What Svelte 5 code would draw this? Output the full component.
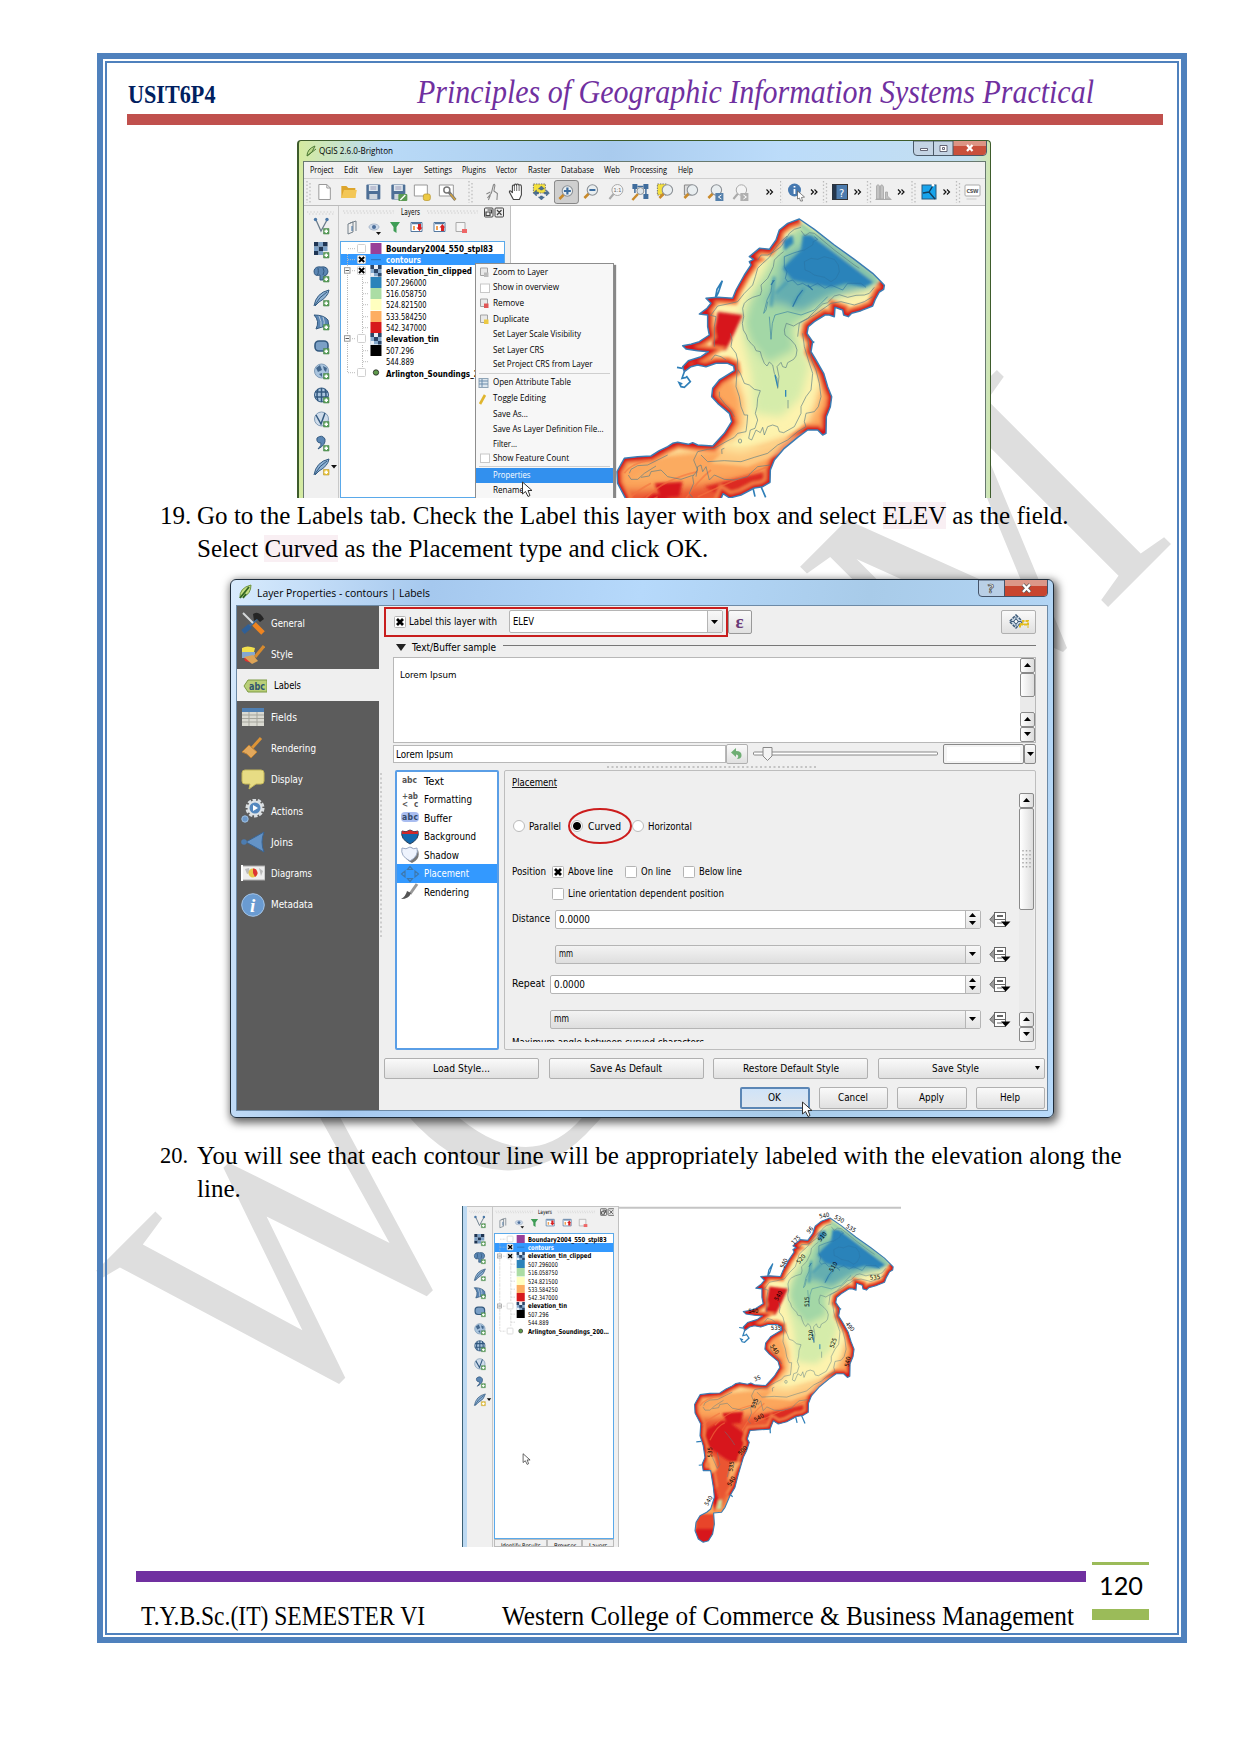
<script>
  const menus = [['Project', 23.5], ['Edit', 14], ['View', 15], ['Layer', 20], ['Settings', 28], ['Plugins', 24], ['Vector', 21], ['Raster', 23], ['Database', 33], ['Web', 16], ['Processing', 37], ['Help', 15]];

  const tools = [
    ['grip', 8], ['new', 24.7], ['open', 24.7], ['save', 24.7], ['saveas', 24.7], ['compose', 24.7], ['manage', 24.7], ['grip', 20],
    ['touch', 24.8], ['pan', 24.8], ['pansel', 24.8], ['zoomin', 24.8], ['zoomout', 24.8], ['zoom11', 24.8], ['zoomfull', 24.8], ['zoomsel', 24.8],
    ['zoomlayer', 24.8], ['zoomlast', 24.8], ['zoomnext', 24.8], ['gap', 6.5], ['more', 21], ['grip', 3], ['identify', 25], ['more', 12], ['grip', 9],
    ['help', 22], ['more', 13], ['grip', 9], ['histogram', 21], ['more', 14], ['grip', 10], ['georef', 22], ['more', 13], ['grip', 9], ['csw', 21]
  ];

  const layerTools = ['vector', 'raster', 'postgis', 'feather', 'mssql', 'oracle', 'wms', 'wcs', 'wfs', 'csv', 'newshape'];

  const tree = [
    { t: 'Boundary2004_550_stpl83', w: 107, b: 1, c: 'off', s: '#983f98' },
    { t: 'contours', w: 35, b: 1, c: 'on', s: 'line', sel: 1 },
    { t: 'elevation_tin_clipped', w: 86, b: 1, c: 'on', s: 'grid', e: 1 },
    { t: '507.296000', w: 40.5, s: '#2b83ba' },
    { t: '516.058750', w: 40.5, s: '#abdda4' },
    { t: '524.821500', w: 40.5, s: '#ffffbf' },
    { t: '533.584250', w: 40.5, s: '#fdae61' },
    { t: '542.347000', w: 40.5, s: '#d7191c' },
    { t: 'elevation_tin', w: 53, b: 1, c: 'off', s: 'grid', e: 1 },
    { t: '507.296', w: 28, s: '#000' },
    { t: '544.889', w: 28, s: '#fff' },
    { t: 'Arlington_Soundings_200…', w: 110, b: 1, c: 'off', s: 'dot' }
  ];

  const context = [
    { t: 'Zoom to Layer', w: 55, h: 15.5, i: 'layer' },
    { t: 'Show in overview', w: 66, h: 15.2, i: 'box' },
    { t: 'Remove', w: 31, h: 16, i: 'remove' },
    { t: 'Duplicate', w: 36, h: 16, i: 'dup' },
    { t: 'Set Layer Scale Visibility', w: 88, h: 15.4 },
    { t: 'Set Layer CRS', w: 51, h: 14.8 },
    { t: 'Set Project CRS from Layer', w: 99.5, h: 14.8 },
    { sep: 1 },
    { t: 'Open Attribute Table', w: 78, h: 16, i: 'table' },
    { t: 'Toggle Editing', w: 53, h: 16, i: 'pencil' },
    { t: 'Save As...', w: 35, h: 15 },
    { t: 'Save As Layer Definition File...', w: 110.5, h: 15 },
    { t: 'Filter...', w: 24, h: 14.5 },
    { t: 'Show Feature Count', w: 76, h: 14.5, i: 'box' },
    { sep: 1 },
    { t: 'Properties', w: 37.5, h: 14.6, sel: 1 },
    { t: 'Rename', w: 31, h: 15 }
  ];

  const tabs = [['General', 34], ['Style', 22], ['Labels', 27], ['Fields', 26], ['Rendering', 45], ['Display', 32], ['Actions', 32], ['Joins', 22], ['Diagrams', 41], ['Metadata', 42]];
  const pages = [['Text', 20], ['Formatting', 48], ['Buffer', 28], ['Background', 52], ['Shadow', 35], ['Placement', 45], ['Rendering', 45]];

  const shore = 'M595,57L640,88 700,135 760,178 815,220 838,243 850,256 848,268 835,276 822,300 815,318 780,332 752,340 742,350 728,345 725,330 702,322 700,350 685,345 672,345 640,365 622,380 618,400 635,425 630,455 645,480 668,520 680,560 692,590 688,620 676,650 675,700 665,705 650,690 620,690 590,712 550,745 520,780 508,810 507,847 485,860 460,864 420,885 386,894 366,881 353,915 272,921 261,955 269,969 258,1003 245,1030 225,1098 211,1152 191,1186 171,1233 157,1253 125,1256 128,1301 121,1341 104,1369 83,1375 63,1362 50,1328 54,1294 70,1267 97,1253 113,1240 128,1192 124,1152 113,1084 83,1084 79,1057 90,1030 83,982 70,942 73,894 50,850 48,815 70,775 110,770 150,768 175,752 200,740 215,730 230,727 262,733 275,728 290,735 335,738 370,700 392,665 385,640 350,610 332,590 335,565 355,540 400,512 398,498 380,490 345,490 315,500 290,495 270,500 250,515 245,500 262,482 300,470 322,455 290,452 255,447 245,437 270,433 295,425 325,405 320,380 320,345 295,342 318,325 330,310 315,295 350,292 395,295 405,270 430,225 450,195 445,185 458,178 445,170 475,145 505,148 525,120 535,90 560,70Z';
  const redShore = 'M838,243L850,256 848,268 835,276 822,300 815,318 780,332 752,340 742,350 728,345 725,330 702,322 700,350 672,345 640,365 622,380 618,400 635,425 630,455 645,480 668,520 680,560 692,590 688,620 676,650 675,700 665,705 650,690 620,690 590,712 550,745 520,780 508,810 507,847 485,860 460,864 420,885 386,894 366,881 353,915 272,921 261,955 269,969 258,1003 245,1030 225,1098 211,1152 191,1186M124,1152L113,1084 83,1084 79,1057 90,1030 83,982 70,942 73,894 50,850 48,815 70,775 150,768 200,740 230,727 290,735 335,738 370,700 392,665 385,640 350,610 332,590 335,565 355,540 400,512 398,498 380,490 345,490 315,500 290,495 250,515 245,500 262,482 300,470 322,455 290,452 255,447 245,437 295,425 325,405 320,380 320,345 295,342 318,325 330,310 315,295 350,292 395,295 405,270 430,225 450,195 445,185 458,178 445,170 475,145 505,148 525,120 535,90 560,70 595,57';

  const contourLabels = [[463, 65, 540, -10], [508, 75, 530, 30], [543, 103, 535, 30], [420, 108, 96, -50], [378, 138, 175, -45], [457, 128, 510, -50], [393, 195, 520, -50], [342, 208, 540, -65], [490, 218, 510, -60], [615, 250, 535, -5], [325, 305, 540, -60], [250, 352, 540, 0], [412, 323, 515, -90], [318, 403, 535, 0], [423, 423, 520, -90], [540, 398, 490, 50], [490, 447, 525, -70], [314, 466, 540, 55], [533, 503, 540, -80], [262, 553, 35, -20], [254, 628, 535, -70], [267, 671, 540, -30], [119, 775, 535, -90], [218, 770, 500, -45], [184, 817, 535, -80], [184, 862, 540, -60], [116, 920, 540, -60]];
</script>

{#snippet fit(text, w, size = 10)}
  <svg class="fit" width={w} height={size} role="img"><text y={size * 0.84} font-size={size} textLength={w} lengthAdjust="spacingAndGlyphs">{text}</text></svg>
{/snippet}

{#snippet lens(x, y)}
  <path d="M{x - 3} {y + 3}L{x - 8} {y + 8}" stroke="#c98a2b" stroke-width="2.6" /><circle cx={x} cy={y} r="5.2" fill="#e9eef0" stroke="#8c9196" stroke-width="1.1" />
{/snippet}

{#snippet toolIcon(k, w)}
  <svg width={w} height="26" viewBox="{-w / 2} -13 {w} 26" fill="none">
    {#if k === 'grip'}<path d="M-1-11V11M2-9V12" stroke="#bbb" stroke-dasharray="1.4 2.2" stroke-width="1.3" />
    {:else if k === 'more'}<path d="M-3-2.5L-.5 0-3 2.5M.5-2.5L3 0 .5 2.5" stroke="#111" stroke-width="1.2" />
    {:else if k === 'new'}<path d="M-5.5-7.500H2.500L6-4V7.500H-5.500Z" fill="#fff" stroke="#999" /><path d="M2.500-7.500V-4H6" stroke="#999" />
    {:else if k === 'open'}<path d="M-7-6H-2L0-4H7V6H-7Z" fill="#dda52c" /><path d="M-7 6L-4.500-2H8.500L7 6Z" fill="#f3c757" />
    {:else if k === 'save' || k === 'saveas'}<rect x="-7" y="-7.500" width="14" height="15" rx="1" fill="#4d6f96" /><path d="M-4.500-7H4.500V-1H-4.500Z" fill="#dfe7ee" /><path d="M-4 2H4V7H-4Z" fill="#cfd6dd" /><path d="M-3-5H3M-3-3H3" stroke="#88a" stroke-width=".8" />
      {#if k === 'saveas'}<rect x="0" y="2" width="9" height="7" rx="1" fill="#5b9a52" /><path d="M2 8L7 3" stroke="#fff" stroke-width="1.4" />{/if}
    {:else if k === 'compose'}<path d="M-8-7H5V4H-8Z" fill="#fff" stroke="#999" /><rect x="1" y="2" width="7" height="6.500" rx="2" fill="#ecc944" stroke="#b8952a" stroke-width=".7" />
    {:else if k === 'manage'}<path d="M-8-7H6V4H-8Z" fill="#fff" stroke="#999" /><circle cx="-.5" cy="-2" r="3" stroke="#777" stroke-width="1.5" /><path d="M1.500 0L8 8" stroke="#777" stroke-width="2.800" /><path d="M3 2L8 8" stroke="#d9a63c" stroke-width="1.200" />
    {:else if k === 'touch'}<path d="M-5 6L-1 1 1-7Q2-8.500 2.500-6.500L1.500-1 5 1.500 4.500 8M-6 2L-2 0M-2 3L-4 8" stroke="#888" stroke-width="1.100" />
    {:else if k === 'pan'}<path d="M-3 7.500L-7 0C-7-2-5-1-4 1V-6Q-3-8-2-6V-7Q-1-9 0-7Q1-9 2.500-7Q5-8 5-5V3L3 7.500Z" fill="#fff" stroke="#444" stroke-width="1.100" /><path d="M-2-6V-1M.300-7V-1M2.700-7V-1" stroke="#444" stroke-width=".8" />
    {:else if k === 'pansel'}<rect x="-8" y="-8" width="12" height="9" fill="#f4e03e" stroke="#777" stroke-dasharray="1.500 1" /><path d="M0-6L3-3H1V-2H-1V-3H-3ZM0 8L3 5H1V4H-1V5H-3ZM-8 1L-5-2V0H-3V2H-5V4ZM8 1L5-2V0H3V2H5V4Z" fill="#4c7095" stroke="#35557a" stroke-width=".5" />
    {:else if k === 'zoomin'}<rect x="-12" y="-11.500" width="24" height="23" rx="2.500" fill="#cfcfcf" stroke="#858585" />{@render lens(1, -1)}<path d="M-2.500-1H4.500M1-4.500V2.500" stroke="#3c6da0" stroke-width="2.200" />
    {:else if k === 'zoomout'}{@render lens(1, -2)}<path d="M-2-2H4" stroke="#3c6da0" stroke-width="2.200" />
    {:else if k === 'zoom11'}<path d="M-2 1L-7 7" stroke="#aaa" stroke-width="2" /><circle cx="1" cy="-2" r="5.500" fill="#f4f4f4" stroke="#aaa" /><text x="-3" y="0" font-size="5.500" fill="#666">1:1</text>
    {:else if k === 'zoomfull'}<path d="M-8-8H-3V-3H-8ZM3-8H8V-3H3ZM3 2H8V7H3Z" fill="#3f6c9c" /><path d="M-3-5.500H3M5.500-3V2M-5.500-3V1" stroke="#3f6c9c" stroke-width="1.500" /><circle cx="0" cy="-1" r="3.500" fill="#dfe6ea" stroke="#8c9196" /><path d="M-2.500 2L-8 8" stroke="#c98a2b" stroke-width="2.500" />
    {:else if k === 'zoomsel'}<path d="M-8-8H1V3H-8Z" fill="#f4e03e" stroke="#777" stroke-dasharray="1.500 1" />{@render lens(2, -2)}
    {:else if k === 'zoomlayer'}<path d="M-6-7H2V3H-6Z" fill="#ddd" stroke="#888" />{@render lens(2, -2)}
    {:else if k === 'zoomlast'}{@render lens(1, -2)}<rect x="0" y="1" width="8" height="8" fill="#5580ab" /><path d="M6 3L3 5 6 7" stroke="#fff" />
    {:else if k === 'zoomnext'}<path d="M-2 1L-7 7" stroke="#aaa" stroke-width="2" /><circle cx="1" cy="-2" r="5.200" fill="#f4f4f4" stroke="#aaa" /><rect x="0" y="1" width="8" height="8" fill="#b0b0b0" /><path d="M3 3L6 5 3 7" stroke="#fff" />
    {:else if k === 'identify'}<circle cx="-1" cy="-2" r="6.500" fill="#4679b0" /><path d="M-1-3V2M-1-6V-4.500" stroke="#fff" stroke-width="1.800" /><path d="M2-1L9 5 6 5.500 7 9 5 9 4 6 2 7Z" fill="#fff" stroke="#555" stroke-width=".7" />
    {:else if k === 'help'}<rect x="-7.500" y="-7.500" width="15" height="15" fill="#4d7cae" stroke="#333" /><rect x="-7.500" y="-7.500" width="4" height="15" fill="#24364c" /><text x="-1" y="4.500" font-size="11" fill="#fff">?</text>
    {:else if k === 'histogram'}<path d="M-7 7V-6Q-5.500-9-4 -6V7ZM-3 7V-6Q-1.500-9 0-5V7ZM2 7V0H4V4L7 7Z" fill="#c2c2c2" stroke="#a5a5a5" stroke-width=".8" /><path d="M-8 7.500H8" stroke="#aaa" />
    {:else if k === 'georef'}<rect x="-7" y="-7" width="14" height="14" fill="#18a4ec" stroke="#24587c" /><path d="M-6 1L0 0 5-8M0 0L6 7" stroke="#163f5c" stroke-width="1.400" /><circle cx="4" cy="-7" r="1.500" fill="#fff" />
    {:else if k === 'csw'}<rect x="-7.500" y="-7" width="15" height="11" rx="1" fill="#fff" stroke="#aaa" /><path d="M-6 7H4" stroke="#ccc" /><text x="-6" y="1" font-size="5.500" font-weight="bold" fill="#555" textLength="12">CSW</text>
    {/if}
  </svg>
{/snippet}

{#snippet layerIcon(k)}
  <svg width="34" height="24.200" viewBox="-18 -12 34 24.200" fill="none" stroke="#33597f">
    {#if k === 'vector'}<path d="M-6-6L-1 5 5-6" stroke="#6b7d8c" stroke-width="1.300" /><circle cx="-6.500" cy="-6.500" r="1.700" fill="#4a78a8" stroke="none" /><circle cx="5" cy="-6.500" r="1.700" fill="#4a78a8" stroke="none" />
    {:else if k === 'raster'}<path d="M-8-8H-3.500V-3.500H-8ZM1-8H5.500V-3.500H1ZM-3.500-3.500H1V1H-3.500ZM-8 1H-3.500V5H-8Z" fill="#1f3553" stroke="none" /><path d="M-3.500-8H1V-3.500H-3.500ZM1-3.500H5.500V1H1ZM-8-3.500H-3.500V1H-8ZM-3.500 1H1V5H-3.500Z" fill="#7ba0c6" stroke="none" />
    {:else if k === 'postgis'}<path d="M-8-3Q-7-8-1-7 6-8 6-2 5 2 2 2L1 6H-2V1Q-8 3-8-3Z" fill="#5b86b3" /><path d="M-4-6Q-3 0-5 1M1-6Q3-3 1 1" />
    {:else if k === 'feather' || k === 'newshape'}<path d="M-8 8Q-6-5 7-8 6-1-3 4L-7 8" fill="#8fb2d4" /><path d="M-7 7Q-3-1 5-6" />
    {:else if k === 'mssql'}<path d="M-8-7Q2-7 6-2L7 5Q0 4-6 7-2-1-8-7Z" fill="#5b86b3" /><path d="M-3-6Q0 0-1 5M1-5Q3 0 2 4" stroke="#bcd" />
    {:else if k === 'oracle'}<rect x="-7" y="-5" width="13" height="10" rx="4" fill="#7ba0c6" stroke-width="1.600" />
    {:else if k === 'wms'}<circle r="7" cx="-.5" fill="#a9c4de" stroke="#7f9bb6" /><path d="M-6-3L-2-6 0-1-4 1ZM1-5L5-3 4 1 2-1ZM-3 3L0 2 0 6Z" fill="#44688e" stroke="none" />
    {:else if k === 'wcs'}<circle r="7" cx="-.5" fill="#a9c4de" /><path d="M-7-3H6M-7 2H6M-.5-7V7M-4-6Q-6 0-4 6M3-6Q5 0 3 6" stroke-width="1.500" />
    {:else if k === 'wfs'}<circle r="7" cx="-.5" fill="#cfdcea" stroke="#7f9bb6" /><path d="M-6-4L-1 5 3-6" stroke-width="1.500" />
    {:else if k === 'csv'}<path d="M-5-5Q0-9 3-4 4 2-4 6 0 2-1 0-6 0-5-5Z" fill="#5b86b3" />
    {/if}
    <path d="M1.500 2.500H7V8H1.500Z" fill={k === 'newshape' ? '#ecc944' : '#5ba05a'} stroke={k === 'newshape' ? '#b8952a' : '#4d8650'} stroke-width=".6" /><path d="M4.250 3.500V7M2.500 5.250H6" stroke="#fff" stroke-width="1.500" />
    {#if k === 'newshape'}<path d="M9-2H15L12 1.500Z" fill="#111" stroke="none" />{/if}
  </svg>
{/snippet}

{#snippet layerPanel()}
  <div class="vbar">
    <svg width="34" height="7"><path d="M3 3H30M5 5H30" stroke="#ccc" stroke-dasharray="1.300 2" /></svg>
    <div class="vicons">{#each layerTools as k}{@render layerIcon(k)}{/each}</div>
  </div>
  <div class="panel">
    <div class="panelhead">
      <svg width="55" height="8"><path d="M2 3H53M3 5H53" stroke="#ccc" stroke-dasharray="1.300 2" /></svg>
      {@render fit('Layers', 19, 8)}
      <svg width="55" height="8"><path d="M2 3H53M3 5H53" stroke="#ccc" stroke-dasharray="1.300 2" /></svg>
      <svg width="20" height="11" fill="#eee" stroke="#444"><rect x=".5" y="1" width="8.500" height="9" rx="1" /><rect x="11" y="1" width="8.500" height="9" rx="1" /><path d="M3.500 3H7.500V6.500M2 5H6V8.500H2ZM13 3L17.500 8M17.500 3L13 8" fill="none" stroke-width="1.200" /></svg>
    </div>
    <svg class="ptools" width="168" height="20" fill="none">
      <path d="M8 6L13 4V14L8 16ZM10 5L16 3V13" stroke="#75808a" /><path d="M12 8V13" stroke="#3c6da0" />
      <ellipse cx="34" cy="9" rx="5" ry="3" fill="#cddaea" stroke="#a9b8cc" /><circle cx="34" cy="9" r="2" fill="#4b6d9a" /><path d="M36 14H41L38.500 17Z" fill="#111" />
      <path d="M50 4H60L56.500 9V15L53.500 13V9Z" fill="#3f9d56" />
      <path d="M71 4.500H82V13.500H71ZM94 4.500H105V13.500H94Z" fill="#fff" stroke="#54789f" /><path d="M72 5.500H81M95 5.500H104" stroke="#54789f" stroke-width="1.500" /><path d="M74 8V12M97 8V12" stroke="#f0a050" stroke-width="2" /><path d="M78 6H81V9.500H82.500L79.500 13 76.500 9.500H78ZM101 13H104V9.500H105L102.500 6 99.500 9.500H101Z" fill="#d92121" />
      <path d="M116 4.500H125V13.500H116Z" fill="#f5f5f5" stroke="#aaa" /><rect x="122" y="11" width="5" height="4" fill="#e66" />
    </svg>
    <div class="tree">
      {#each tree as r, i}
        <div class="trow" class:sel={r.sel} class:bold={r.b}>
          <svg width="45" height="11.370" viewBox="1 0 45 11.370" fill="none">
            {#if r.c}<path d="M{r.e ? 12 : 8} 5.700H16" stroke="#bbb" stroke-dasharray="1 1" />{:else}<path d="M22.500 0V11.400M23 5.700H29" stroke="#bbb" stroke-dasharray="1 1" />{/if}
            {#if i > 0}<path d="M7.500 0V{i === 11 ? 6 : 11.4}" stroke="#bbb" stroke-dasharray="1 1" />{/if}
            {#if r.e}<rect x="4.500" y="2.700" width="5.500" height="5.500" fill="#fff" stroke="#999" /><path d="M5.500 5.500H9" stroke="#555" />{/if}
            {#if r.c}<rect x="17.500" y="1.500" width="8" height="8" rx="1" fill="#fff" stroke="#d0d0d0" />{/if}
            {#if r.c === 'on'}<path d="M19 3L24.200 8M24.200 3L19 8" stroke="#000" stroke-width="2" />{/if}
            {#if r.s === 'grid'}<rect x="30.500" y="0" width="11" height="11.400" fill="#85a9cd" /><path d="M30.500 0H34V4H30.500ZM38 0H41.500V4H38ZM34 4H38V8H34ZM38 8H41.500V11.400H38Z" fill="#2b4567" /><path d="M34 0H38V4H34ZM30.500 8H34V11.400H30.500Z" fill="#e8eef5" />
            {:else if r.s === 'dot'}<circle cx="36" cy="5.500" r="2.700" fill="#5f9a4c" stroke="#222" stroke-width=".8" />
            {:else if r.s === 'line'}<path d="M31 5.700H41" stroke="#2a6fb0" />
            {:else}<rect x="30.500" y="0" width="11" height="11.400" fill={r.s} />{/if}
          </svg>
          {@render fit(r.t, r.w, r.b ? 9.2 : 9)}
        </div>
      {/each}
    </div>
    <div class="ptabs"><span>{@render fit('Identify Results', 54, 9)}</span><span>{@render fit('Browser', 30, 9)}</span><span>{@render fit('Layers', 25, 9)}</span></div>
  </div>
{/snippet}

{#snippet lake(id)}
  <defs>
    <clipPath id="clip-{id}"><path d={shore} /></clipPath>
    <filter id="b1-{id}" x="-30%" y="-30%" width="160%" height="160%"><feGaussianBlur stdDeviation="4.500" /></filter>
    <filter id="b2-{id}" x="-30%" y="-30%" width="160%" height="160%"><feGaussianBlur stdDeviation="13" /></filter>
  </defs>
  <g fill="none" stroke="#2f7fb8" stroke-width="5">
    <path d="M343,295L348,268 364,242 352,278ZM245,505L228,502M250,515L243,535 256,532 M256,528L268,545 250,562 240,560 234,548 244,552M455,860L462,890M480,860L494,892M75,965L55,967M85,1060L65,1062M190,1180L202,1190M353,915L354,932M630,425L640,427" />
  </g>
  <g clip-path="url(#clip-{id})">
    <rect x="0" y="30" width="900" height="1380" fill="#fdf3ae" />
    <g filter="url(#b2-{id})">
      <path d="M0,800L190,765 340,745 420,760 560,715 640,690 560,830 300,1000 230,1400 0,1400Z" fill="#fca65c" />
      <path d="M345,540L395,520 425,600 425,680 380,730 320,620ZM690,560L660,560 645,620 610,690 700,720Z" fill="#fca65c" />
      <path d="M60,870L130,870 270,860 400,840 540,800 520,900 260,930 240,1090 150,1260 100,1100Z" fill="#ea5530" />
      <path d="M515,150L420,330 425,420 450,520 460,640 540,650 600,590 625,500 590,390 700,290 815,270 800,200 600,80Z" fill="#d5ecaa" />
      <path d="M545,130L500,220 450,300 430,370 450,430 500,490 580,450 570,380 660,320 720,285 815,262 850,240 700,130 600,70Z" fill="#a3d7a6" />
      <path d="M550,170L535,250 490,310 540,310 600,335 690,285 800,262 830,235 660,105Z" fill="#65aeb0" />
    </g>
    <g filter="url(#b1-{id})">
      <path d="M565,185L600,150 605,105 640,105 740,180 825,243 790,262 735,250 690,262 620,250 575,240 545,205Z" fill="#2b83ba" />
      <path d="M545,120L575,105 578,130 550,152Z" fill="#2f86b8" />
      <path d="M595,72L830,250" stroke="#8fcca8" stroke-width="9" />
      <path d="M520,230L510,320M610,265L575,315M560,245L525,280" stroke="#4a9cb2" stroke-width="8" />
      <path d="M350,335L425,345 400,400 375,450 330,455 340,390Z" fill="#d7191c" />
      <path d="M160,850L245,845 235,890 180,895ZM100,915L160,880 200,895 265,945 262,1010 215,1060 170,1035 120,1000 85,960Z" fill="#d7191c" />
      <path d="M310,860L430,830 500,815 490,870 380,900Z" fill="#dd2a20" />
      <path d="M55,1260H130V1380H50Z" fill="#e8452c" /><path d="M50,1320H130V1380H50ZM125,1130L145,1200 130,1250 110,1160Z" fill="#d7191c" />
      <path d={redShore} fill="none" stroke="#f7894c" stroke-width="38" />
      <path d={redShore} fill="none" stroke="#d7191c" stroke-width="21" />
      <path d="M95,1010L130,1030 140,1080 115,1095ZM195,1050L235,1050 200,1110 180,1130Z" fill="#fbb066" />
      <path d="M90,840L130,805 200,775 280,770 290,815 230,825 170,838 120,842Z" fill="#fbab60" />
      <path d="M330,790L380,740 480,740 620,695 540,760 440,800Z" fill="#fee096" opacity=".6" />
      <path d="M145,1205L160,1200 155,1240 138,1240Z" fill="#c6e6a8" />
    </g>
    <g fill="none" stroke="#f4733f" stroke-width="5" opacity=".6"><path d="M130,900Q180,840 290,815M240,920Q280,850 330,810M80,900Q110,870 150,850M290,890Q400,840 500,800M70,820Q90,790 150,780M110,960Q140,900 170,890" /></g>
    <g fill="none" stroke="#5d7f87" stroke-width="2">
      <path d="M548,155L535,165 520,180 517,200 510,215 500,235 480,255 482,272 478,285 455,292 440,300 430,310 425,325 428,350 424,370 427,390 436,405 440,418 450,430 460,440 465,452 478,455 482,470 490,490 498,498 505,486 515,495 520,520 528,535 530,565 534,530 528,500 540,487 545,500 555,503 560,488 578,478 585,468 588,450 583,435 570,420 552,405 550,390 556,370 578,378 595,368 620,355 640,335 665,312 680,308 700,288 715,284 740,292 765,286 790,285 805,280 820,262" />
      <path d="M600,92L612,108 625,98 640,100 700,150 760,195 775,205M558,108L530,135 515,155 505,172 485,190 470,205 463,230 455,255 430,280 410,305 380,312 350,318 330,345M600,82L580,88 565,100 550,125 540,140 520,155 500,165 480,165 470,180M590,410L595,370 640,345 690,310 720,305 760,315 790,305 815,290" />
      <path d="M515,240L510,275 498,300 488,340 495,330 500,305M505,350L510,418 514,370 522,345 560,335 600,345 640,330 660,310 680,290" stroke="#3c84a2" />
      <path d="M610,185L630,175 650,178 670,170 700,178 712,195 715,215 705,235 690,245 670,232 640,225 625,215 612,210ZM640,110L650,118 637,125 635,135 618,145 610,150 590,155 575,160 550,170 550,200 558,215 553,235 560,245 575,240 590,255 605,250 625,262 650,250 672,265 690,255 725,270 740,250 780,250 795,262" stroke="#2a75a6" />
      <path d="M605,270L590,290 575,320M520,240L510,255M620,255L635,270" stroke="#2a75a6" stroke-width="3.500" />
      <path d="M522,525L530,560M554,570V590" stroke="#2f86b8" stroke-width="4" />
      <path d="M388,400L393,420 390,440 405,460 410,480 408,505 418,520 430,550 445,555 460,568 478,572 470,595 468,620 463,640 470,660 462,685 448,690 443,715 452,720 465,690 478,698 485,682 490,705 500,680 515,675 530,680 535,695 548,698 580,680 600,640 600,620 615,590 630,570 635,520 625,490 610,440 605,400" />
      <path d="M408,510L405,560 415,590 420,620 430,645 440,645 438,670 435,695 410,700 400,712 375,725 340,745 320,748 290,755 278,780 290,810 275,830 278,850 265,880 275,893M620,400L622,430 632,480 645,510 655,550 660,590 652,620 640,635 615,640 610,665 615,680 590,695 560,720 530,735 500,760 460,772 420,785 370,782 320,785 300,765" />
      <path d="M355,575L355,590 370,610 385,625 400,650M285,830L290,800 300,795 305,815 315,800 325,840 340,825 370,838 400,840 440,830 450,818 470,800 508,795M85,820L90,808 110,797 140,795 200,765M82,825L90,838 110,838 130,820 165,798M120,832L145,828 150,815 180,810 200,830 240,838 278,825M330,480L342,465 360,470 375,480M325,345L345,350 340,380 340,440M140,1010L150,1060 140,1075 120,1030M180,1110L190,1070 210,1060M170,925Q200,960 210,980" />
      <ellipse cx="417" cy="723" rx="5" ry="6" /><path d="M363,762L362,748 370,745M561,600V625" />
    </g>
  </g>
  <path d={shore} fill="none" stroke="#3a7cb4" stroke-width="4.500" stroke-linejoin="round" />
{/snippet}

{#snippet box(on)}
  <svg width="12" height="12"><rect x=".5" y=".5" width="11" height="11" rx="1" fill="#fff" stroke="#b4b4b4" />{#if on}<path d="M3 3L9 9M9 3L3 9" stroke="#000" stroke-width="2.800" />{/if}</svg>
{/snippet}

{#snippet arrow(up)}
  <svg width="7" height="4"><path d={up ? 'M0 4H7L3.5 0Z' : 'M0 0H7L3.5 4Z'} /></svg>
{/snippet}

{#snippet override()}
  <svg class="ovr" width="22" height="17" fill="#fff" stroke="#666"><path d="M5.500 3L.800 8.500 5.500 13Z" fill="#999" /><rect x="5.500" y="1.500" width="11" height="14" /><path d="M8 5H14" stroke-width="2" /><path d="M6 8.500H16M8 12H13" /><path d="M12 10.500H21.500L16.700 15.500Z" fill="#000" stroke="none" /></svg>
{/snippet}

{#snippet tabIcon(k)}
  <svg width="24" height="24" viewBox="-12 -12 24 24" fill="none">
    {#if k === 'General'}<path d="M-10 9L6-6" stroke="#3e6d9e" stroke-width="2" /><path d="M-10 9L-3 3" stroke="#2f5f96" stroke-width="5" /><path d="M-10-10L0 0" stroke="#d5d8da" stroke-width="2" /><path d="M1 1L10 10" stroke="#ee8420" stroke-width="5" /><path d="M0-9Q6-13 11-4L7-1 4-4 1-2Z" fill="#252525" />
    {:else if k === 'Style'}<path d="M-11-6Q-6-9 2-6L1-2H-11Z" fill="#f2e04c" /><path d="M-11-2H2V4H-11Z" fill="#86a8cf" /><path d="M-9 4L0 5-1 9-8 7Z" fill="#e03030" /><path d="M0 1L5 7-1 10-9 3Z" fill="#dda457" /><path d="M2 3L11-8" stroke="#d58a2f" stroke-width="3" />
    {:else if k === 'Labels'}<path d="M-11 0L-7-6H12V6H-7Z" fill="#b9cf78" stroke="#7d9a44" /><text x="-6" y="3.500" font-size="10" font-weight="bold" fill="#30566f" textLength="16" lengthAdjust="spacingAndGlyphs">abc</text>
    {:else if k === 'Fields'}<rect x="-11" y="-9" width="22" height="18" fill="#dadad2" /><rect x="-11" y="-9" width="22" height="4" fill="#4f7fb2" /><path d="M-11-2H11M-11 1.500H11M-11 5H11M-4-5V9M4-5V9" stroke="#a5a59c" />
    {:else if k === 'Rendering'}<path d="M-1 0L8-10" stroke="#dd9436" stroke-width="3" /><path d="M-4-3L4 4-2 10Q-6 5-11 4Z" fill="#e2a85c" stroke="#b97f35" />
    {:else if k === 'Display'}<path d="M-8-10H8Q11-10 11-7V1Q11 4 8 4H3L-4 9-3 4H-8Q-11 4-11 1V-7Q-11-10-8-10Z" fill="#e7dc84" stroke="#c4b75a" />
    {:else if k === 'Actions'}<circle cx="2" cy="-3" r="7.500" stroke="#d9dde0" stroke-width="4" stroke-dasharray="3.200 1.500" /><circle cx="2" cy="-3" r="6.500" fill="#5588be" stroke="#dfe3e6" stroke-width="2" /><path d="M0-6L5-3 0 0Z" fill="#fff" /><circle cx="-8" cy="8" r="3.200" fill="#6d98c8" stroke="#9fc0e0" />
    {:else if k === 'Joins'}<path d="M-7 0L11-10Q7 0 11 10Z" fill="#6493c6" stroke="#3b6695" /><circle cx="-9" cy="0" r="2.800" fill="#4c7cb0" />
    {:else if k === 'Diagrams'}<rect x="-11" y="-7" width="23" height="14" fill="#eee" stroke="#aaa" /><path d="M-11-8V8" stroke="#fff" stroke-width="2" /><path d="M-8-4L-4-5-3 0-6 1ZM6-5L10-2 8 3Z" fill="#bbb" /><circle cx="0" cy="0" r="4.500" fill="#e8c84a" /><path d="M0 0V-4.500A4.500 4.500 0 0 1 2 4Z" fill="#d33" />
    {:else}<circle r="11.300" fill="#6a9bd1" stroke="#a4c4e6" /><text x="-3" y="7" font-size="19" font-weight="bold" font-style="italic" font-family="Liberation Serif, serif" fill="#fff">i</text>{/if}
  </svg>
{/snippet}

{#snippet pageIcon(k)}
  <svg width="20" height="18" viewBox="-10 -9 20 18" fill="none">
    {#if k === 'Text'}<text x="-8" y="2" font-size="8.500" font-weight="bold" fill="#555" textLength="15">abc</text>
    {:else if k === 'Formatting'}<text x="-8" y="-1" font-size="8" font-weight="bold" fill="#555" textLength="16">+ab</text><text x="-8" y="6.500" font-size="8" font-weight="bold" fill="#555">&lt;</text><text x="4" y="6.500" font-size="8" font-weight="bold" fill="#555">c</text>
    {:else if k === 'Buffer'}<rect x="-9" y="-6" width="18" height="10" rx="4" fill="#a9bdf0" /><text x="-8" y="2" font-size="8.500" font-weight="bold" fill="#334a6b" textLength="16">abc</text>
    {:else if k === 'Background'}<path d="M-8-6Q-4-4 0-7 4-4 8-6 10 2 0 7-10 2-8-6Z" fill="#1268ae" stroke="#223a55" /><path d="M-8-6Q-4-4 0-7 4-4 8-6V-3H-8Z" fill="#d02828" />
    {:else if k === 'Shadow'}<path d="M-6-6Q-2-4 1-8 5-4 8-5 11 4 2 8-7 4-6-6Z" fill="#777" /><path d="M-8-7Q-4-5 0-8 4-5 7-7 9 1 0 6-10 1-8-7Z" fill="#eef3fd" stroke="#9aa9c4" />
    {:else if k === 'Placement'}<path d="M0-7.500L2.500-4.500H-2.500ZM0 7.500L2.500 4.500H-2.500ZM-8.500 0L-5-3V3ZM8.500 0L5-3V3Z" stroke="#3e78ad" stroke-width="1.200" />
    {:else}<path d="M7-8L0 2" stroke="#999" stroke-width="3" /><path d="M1 1Q-1 7-9 7-4 4-3-1Z" fill="#555" />{/if}
  </svg>
{/snippet}

{#snippet cursor()}
  <svg width="13" height="17"><path d="M1.500 1V13L4.500 10.500 7 15.500 9 14.500 7 9.500H11Z" fill="#fff" stroke="#333" /></svg>
{/snippet}

<div class="page">
  <svg class="watermark" width="1241" height="1755"><text transform="translate(270 1445) rotate(-45)" font-size="376" textLength="1284" lengthAdjust="spacingAndGlyphs">WCCBM</text></svg>
  <div class="frame"><div class="inner">
    <header>
      <span class="code">{@render fit('USIT6P4', 87.5, 25)}</span>
      <span class="title">{@render fit('Principles of Geographic Information Systems Practical', 677, 33)}</span>
    </header>
    <div class="redbar"></div>

    <section class="shot win">
      <div class="wtitle">
        <svg width="16" height="14"><path d="M4 12Q4 5 12 2 10 9 4 12L13 5" fill="#bcd98b" stroke="#4d7a35" /></svg>
        {@render fit('QGIS 2.6.0-Brighton', 74, 9.5)}
        <svg class="wbtns" width="75" height="15"><path d="M.5 0V11Q.5 14.500 4 14.500H70Q73.500 14.500 73.500 11V0Z" fill="#c4d4e4" stroke="#4b5a68" /><path d="M40 0H73V10.500Q73 14 70 14H40Z" fill="#c9503c" /><path d="M40 0H73V5H40Z" fill="#dd9484" /><path d="M20.500 0V14M40 0V14" stroke="#4b5a68" /><path d="M7.500 7.500H14.500V9.500H7.500ZM27 4.500H34V10.500H27ZM29.500 6.500H31.500V8.500H29.500Z" fill="#fff" stroke="#445" stroke-width=".8" /><path d="M54 4L59.500 10M59.500 4L54 10" stroke="#fff" stroke-width="2.200" /></svg>
      </div>
      <div class="wbody">
        <nav>{#each menus as m}{@render fit(m[0], m[1], 8.4)}{/each}</nav>
        <div class="toolbar">{#each tools as t}{@render toolIcon(t[0], t[1])}{/each}</div>
        <div class="wmain">
          {@render layerPanel()}
          <svg class="canvas" width="476" height="291.500" viewBox="-270 18 1428 874.500">{@render lake('a')}</svg>
          <div class="ctx">
            {#each context as c}
              {#if c.sep}<div class="csep"></div>
              {:else}
                <div class="citem" class:csel={c.sel} style:height="{c.h}px">
                  <svg width="17.500" height="14" fill="none">
                    {#if c.i === 'box'}<rect x="4.500" y="3" width="9" height="8.500" fill="#fff" stroke="#c8c8c8" />
                    {:else if c.i === 'table'}<rect x="3" y="2.500" width="9" height="9" fill="#dce6ee" stroke="#8fa4b6" /><path d="M3 5H12M3 8H12M6 3V11" stroke="#6b8cab" />
                    {:else if c.i === 'pencil'}<path d="M4 12L9 3" stroke="#e0b52e" stroke-width="2.600" />
                    {:else if c.i}<path d="M4.500 3H11.500V10.500H4.500Z" fill="#e8e8e8" stroke="#a2a2a2" /><rect x="8" y="7.500" width="4.500" height="4.500" fill={c.i === 'remove' ? '#e05656' : c.i === 'dup' ? '#ecc944' : '#bbb'} />{/if}
                  </svg>
                  {@render fit(c.t, c.w, 8.8)}
                </div>
              {/if}
            {/each}
            <div class="cur">{@render cursor()}</div>
          </div>
        </div>
      </div>
    </section>

    <div class="step s19"><span class="num">19.</span><p>Go to the Labels tab. Check the Label this layer with box and select <mark>ELEV</mark> as the field.<br />Select <mark>Curved</mark> as the Placement type and click OK.</p></div>

    <section class="dialog">
      <div class="dtitle">
        <svg width="15" height="16"><path d="M2 14Q1 4 13 1 13 10 5 13" fill="#c3dc82" stroke="#6d9440" /><path d="M2 14L11 3M5 14L8 10" stroke="#2f6424" stroke-width="1.800" /></svg>
        {@render fit('Layer Properties - contours | Labels', 173, 11.5)}
        <svg class="dbtns" width="71" height="18"><path d="M.5 0V13Q.5 16.500 4 16.500H66Q69.500 16.500 69.500 13V0Z" fill="#b9cfe6" stroke="#44546a" /><path d="M27 0H69V13Q69 16 66 16H27Z" fill="#c8452f" /><path d="M27 0H69V6H27Z" fill="#dc9788" /><path d="M26.500 0V16" stroke="#44546a" /><text x="10" y="13" font-size="12" font-weight="bold" fill="#fff" stroke="#444" stroke-width=".7">?</text><path d="M45 4.500L52 12M52 4.500L45 12" stroke="#555" stroke-width="3.800" /><path d="M45 4.500L52 12M52 4.500L45 12" stroke="#fff" stroke-width="2.400" /></svg>
      </div>
      <div class="dbody">
        <aside>{#each tabs as t}<div class="tab" class:active={t[0] === 'Labels'}>{@render tabIcon(t[0])}{@render fit(t[0], t[1], 10.5)}</div>{/each}</aside>
        <svg class="vdots" width="5" height="165"><path d="M2 0V165" stroke="#ccc" stroke-dasharray="2 2.500" stroke-width="2" /></svg>
        <div class="dmain">
          <div class="r1">
            <div class="redbox">{@render box(true)}<span class="lab">{@render fit('Label this layer with', 88, 11)}</span>
              <div class="combo elev"><span>{@render fit('ELEV', 21, 10.5)}</span><i>{@render arrow(false)}</i></div>
            </div>
            <div class="btn eps">ε</div>
            <div class="btn place"><svg width="22" height="16" fill="none"><path d="M8 1L14.500 7.500 8 14 1.500 7.500Z" fill="#cfdce8" stroke="#3d5a78" stroke-width="1.500" stroke-dasharray="3 1" /><path d="M8 3V12M3 7.500H13" stroke="#3d5a78" /><circle cx="8" cy="7.500" r="2" fill="#fff" stroke="#3d5a78" /><path d="M12 13.500V10H15V7H20V13.500M12 10.500H20" stroke="#e3bd20" stroke-width="2" stroke-dasharray="3 1" /></svg></div>
          </div>
          <div class="r2"><svg width="18" height="9"><path d="M2 1H12L7 8Z" fill="#222" /></svg>{@render fit('Text/Buffer sample', 84, 10.8)}<hr /></div>
          <div class="sample"><span>{@render fit('Lorem Ipsum', 56.5, 9.5)}</span>
            <div class="sb"><b>{@render arrow(true)}</b><b class="thumb1"></b><em></em><b>{@render arrow(true)}</b><b>{@render arrow(false)}</b></div>
          </div>
          <div class="r4">
            <div class="field">{@render fit('Lorem Ipsum', 57, 10.5)}</div>
            <div class="btn undo"><svg width="12" height="11"><path d="M5 0V3Q11 3 10.500 8 10 11 6 11 9 7 5 6.500V9L0 4.500Z" fill="#6fae74" /></svg></div>
            <svg class="slider" width="186" height="17"><rect x=".5" y="7" width="184" height="3" rx="1" fill="#fff" stroke="#888" /><path d="M10 2.500H19V11L14.500 15.500 10 11Z" fill="#f4f4f4" stroke="#888" /></svg>
            <div class="swatch"><i></i></div><div class="btn sw2">{@render arrow(false)}</div>
          </div>
          <svg class="hdots" width="210" height="4"><path d="M0 2H210" stroke="#c4c4c4" stroke-dasharray="2 2.500" stroke-width="2" /></svg>
          <div class="r5">
            <div class="list">{#each pages as p}<div class="pitem" class:psel={p[0] === 'Placement'}>{@render pageIcon(p[0])}{@render fit(p[0], p[1], 10.8)}</div>{/each}</div>
            <div class="group">
              <div class="gform">
                <div class="gh"><u>{@render fit('Placement', 45, 10.5)}</u></div>
                <div class="radios">
                  <s></s><span class="p1">{@render fit('Parallel', 32, 10.5)}</span>
                  <s class="on"></s><span class="p2">{@render fit('Curved', 33, 10.5)}</span>
                  <s></s><span>{@render fit('Horizontal', 44, 10.5)}</span>
                  <svg class="ring" width="66" height="38"><ellipse cx="33" cy="19" rx="31" ry="17" fill="none" stroke="#cc1d1d" stroke-width="2" /></svg>
                </div>
                <div class="pos"><span class="pl">{@render fit('Position', 34, 10)}</span>{@render box(true)}<span class="a1">{@render fit('Above line', 45, 10)}</span>{@render box(false)}<span class="a2">{@render fit('On line', 30, 10)}</span>{@render box(false)}<span class="a3">{@render fit('Below line', 43, 10)}</span></div>
                <div class="ori">{@render box(false)}<span class="a1">{@render fit('Line orientation dependent position', 156, 10)}</span></div>
                <div class="frow f1"><span class="fl">{@render fit('Distance', 38, 10)}</span><div class="combo"><span>{@render fit('0.0000', 31, 10.5)}</span><i class="spin">{@render arrow(true)}{@render arrow(false)}</i></div>{@render override()}</div>
                <div class="frow f2"><div class="combo gr"><span>{@render fit('mm', 14, 10)}</span><i>{@render arrow(false)}</i></div>{@render override()}</div>
                <div class="frow f3"><span class="fl">{@render fit('Repeat', 33, 10)}</span><div class="combo"><span>{@render fit('0.0000', 31, 10.5)}</span><i class="spin">{@render arrow(true)}{@render arrow(false)}</i></div>{@render override()}</div>
                <div class="frow f4"><div class="combo gr"><span>{@render fit('mm', 15, 10)}</span><i>{@render arrow(false)}</i></div>{@render override()}</div>
                <div class="cut">{@render fit('Maximum angle between curved characters', 192, 10)}</div>
              </div>
              <div class="sb gsb"><b>{@render arrow(true)}</b><b class="thumb2"><svg width="9" height="18"><path d="M1 0V18M4.500 0V18M8 0V18" stroke="#aaa" stroke-dasharray="1.500 2.500" stroke-width="1.500" /></svg></b><em></em><b>{@render arrow(true)}</b><b>{@render arrow(false)}</b></div>
            </div>
          </div>
          <div class="r6">
            <div class="btn">{@render fit('Load Style...', 57, 10.5)}</div><div class="btn">{@render fit('Save As Default', 72, 10.5)}</div><div class="btn">{@render fit('Restore Default Style', 96, 10.5)}</div><div class="btn menu">{@render fit('Save Style', 47, 10.5)}<svg class="dd" width="5" height="4"><path d="M0 0H5L2.500 4Z" /></svg></div>
          </div>
          <div class="r7">
            <div class="btn ok">{@render fit('OK', 13, 10)}<div class="cur2">{@render cursor()}</div></div><div class="btn">{@render fit('Cancel', 30, 10)}</div><div class="btn">{@render fit('Apply', 25, 10)}</div><div class="btn">{@render fit('Help', 20, 10)}</div>
          </div>
        </div>
      </div>
    </section>

    <div class="step s20"><span class="num">20.</span><p>You will see that each contour line will be appropriately labeled with the elevation along the<br />line.</p></div>

    <section class="shot result">
      <div class="edge"></div>
      <div class="mini">{@render layerPanel()}<div class="cur3">{@render cursor()}</div></div>
      <svg class="canvas2" width="282" height="341" viewBox="-153 36 846 1023">
        <path d="M-153 41H693" stroke="#c4c4c4" stroke-width="6" />
        <g transform="translate(38 30) scale(.743 .738)">{@render lake('b')}</g>
        {#each contourLabels as [x, y, t, a]}<text transform="translate({x} {y}) rotate({a})" y="6" text-anchor="middle" font-size="18">{t}</text>{/each}
      </svg>
    </section>

    <footer>
      <div class="fleft">
        <div class="purple"></div>
        <div class="ftext"><span>{@render fit('T.Y.B.Sc.(IT) SEMESTER VI', 284, 27)}</span><span>{@render fit('Western College of Commerce & Business Management', 572, 27)}</span></div>
      </div>
      <div class="pageno"><i class="g1"></i><span>{@render fit('120', 44, 25)}</span><i class="g2"></i></div>
    </footer>
  </div></div>
</div>

<style>
  :global(body) { margin: 0; background: #fff; }
  * { box-sizing: border-box; }
  svg { flex: none; display: block; }
  .fit { overflow: visible; }
  .page { position: relative; width: 1241px; height: 1755px; padding: 53px 54px 112px 97px; background: #fff; overflow: hidden; font-family: "DejaVu Sans Condensed", "DejaVu Sans", sans-serif; }
  .watermark { position: absolute; left: 0; top: 0; font-family: "Liberation Serif", serif; fill: #dedede; }
  .frame { position: relative; height: 1590px; border: 6px solid #4f81bd; padding: 2px; }
  .inner { height: 100%; border: 2px solid #4f81bd; display: flex; flex-direction: column; }
  header { flex: none; display: flex; height: 51px; padding-left: 21px; font-family: "Liberation Serif", serif; }
  .code { font-weight: bold; fill: #002060; padding-top: 19px; width: 289px; }
  .title { font-style: italic; fill: #7030a0; padding-top: 12px; }
  .redbar { flex: none; height: 11px; width: 1036px; margin-left: 20px; background: #c0504d; }
  .shot { flex: none; display: flex; overflow: hidden; background: #fff; }

  .win { position: relative; flex-direction: column; width: 694.500px; height: 357.500px; margin: 15px 0 0 189.500px; border: solid #3e5c2c; border-width: 1px 1px 0 2px; border-radius: 4px 4px 0 0; background: linear-gradient(90deg, #d5eba0, #b9daf7 12%, #a9cbee 45%, #bcdcfa 70%, #c3def0 97%, #cfe6b0); }
  .wtitle { flex: none; height: 20px; display: flex; align-items: center; padding: 0 0 1px 4px; font-family: "Open Sans", sans-serif; }
  .wbtns { margin: 0 2px 0 auto; align-self: flex-start; }
  .wbody { flex: 1; min-height: 0; display: flex; flex-direction: column; margin: 0 4px 0 4px; border: solid #68796f; border-width: 1px 1px 0; background: #f0f0f0; }
  nav { flex: none; height: 15.500px; display: flex; gap: 10.300px; align-items: center; padding: 1px 0 0 6.500px; font-family: "Open Sans", sans-serif; }
  .toolbar { flex: none; height: 27.500px; display: flex; align-items: center; border-top: 1px solid #cfcfcf; }
  .wmain { position: relative; flex: 1; display: flex; min-height: 0; border-top: 1.500px solid #bbb; overflow: hidden; }
  .vbar { flex: none; width: 35px; background: #f0f0f0; border-right: 1px solid #c8c8c8; display: flex; flex-direction: column; align-items: center; padding-top: 3px; }
  .vicons { margin-top: -2.500px; }
  .panel { flex: none; width: 172px; background: #f0f0f0; border-right: 1px solid #c0c0c0; display: flex; flex-direction: column; padding: 0 5px 0 1.500px; }
  .panelhead { display: flex; align-items: center; justify-content: space-between; height: 12px; padding-left: 1px; }
  .ptools { flex: none; margin-bottom: 2.500px; }
  .tree { flex: 1; border: 1.500px solid #5aa9ea; background: #fff; min-height: 0; padding-top: 1px; overflow: hidden; }
  .trow { display: flex; height: 11.370px; align-items: center; }
  .bold { font-weight: bold; }
  .trow.sel { background: #3399ff; fill: #fff; }
  .ptabs { display: none; }
  .canvas { background: #fff; }
  .ctx { position: absolute; left: 171px; top: 56.500px; width: 139.500px; height: 260px; background: #f7f7f7; border: 1px solid #8d8d8d; box-shadow: 2px 2px 1px #888; padding-top: 1px; font-family: "Open Sans", sans-serif; }
  .citem { display: flex; align-items: center; }
  .csel { background: #3290ee; fill: #fff; }
  .csep { height: 1px; margin: .5px 3px 1px; background: #cfcfcf; }
  .cur { position: absolute; left: 45px; top: 217px; }

  .step { flex: none; display: flex; font: 25px/33.600px "Liberation Serif", serif; color: #000; word-spacing: .12px; }
  .step p { margin: 0; white-space: nowrap; }
  .num { width: 37px; }
  .s19 { margin: 1px 0 0 53px; }
  .s20 { margin: 20.500px 0 0 53px; }
  .s20 .num { font-size: 22.500px; }
  mark { background: #f9eff3; color: inherit; }

  .dialog { flex: none; width: 824px; height: 539px; margin: 13.700px 0 0 123px; border: 1px solid #1f2d3b; border-radius: 6px; padding: 0 5px 6px; background: linear-gradient(100deg, #d8ebfd, #a5c8ee 22%, #b6d9fb 45%, #a8cbe9 70%, #b8dafa); box-shadow: 2px 3px 9px 2px rgba(0, 0, 0, .6); display: flex; flex-direction: column; }
  .dtitle { flex: none; height: 25px; display: flex; align-items: center; gap: 4px; padding: 0 0 1px 2px; font-family: "Open Sans", sans-serif; }
  .dbtns { margin: 0 -1px 0 auto; align-self: flex-start; }
  .dbody { flex: 1; min-height: 0; display: flex; border: 1px solid #6d8aa6; background: #efefef; }
  aside { flex: none; width: 142px; background: #5c5c5c; fill: #fff; padding-top: .5px; }
  .tab { height: 31.300px; display: flex; align-items: center; gap: 6px; padding-left: 4px; padding-top: 1px; }
  .tab.active { background: #efefef; fill: #000; padding-left: 6px; gap: 7px; }
  .vdots { margin: 167px -5px 0 0; }
  .dmain { flex: 1; min-width: 0; display: flex; flex-direction: column; }
  .r1 { flex: none; height: 30.500px; display: flex; align-items: center; padding-left: 4.500px; }
  .redbox { width: 344px; height: 30px; border: 2px solid #c81e1e; display: flex; align-items: center; padding-left: 8px; }
  .lab { margin: 0 12px 0 3px; }
  .combo { display: flex; align-items: stretch; background: #fff; border: 1.500px solid #b5b5b5; border-radius: 2px; }
  .combo > span { flex: 1; align-self: center; padding-left: 3px; }
  .combo i { width: 15px; display: flex; flex-direction: column; align-items: center; justify-content: center; border-left: 1.500px solid #b5b5b5; background: linear-gradient(#f8f8f8, #e4e4e4); }
  .combo .spin { gap: 4px; }
  .gr { background: linear-gradient(#f3f3f3, #dedede); }
  .elev { width: 214px; height: 23px; }
  .btn { position: relative; display: flex; align-items: center; justify-content: center; border: 1.500px solid #b0b0b0; border-radius: 2px; background: linear-gradient(#fafafa, #e0e0e0); }
  .eps { width: 24px; height: 24px; border-color: #999; color: #6b3a78; font: bold 19px/20px "Liberation Serif", serif; }
  .place { width: 35px; height: 24px; margin: 0 11px 0 auto; }
  .r2 { flex: none; height: 20px; display: flex; align-items: center; padding: 2px 11px 0 14.500px; }
  hr { flex: 1; margin: -5px 0 0 7px; border: 0; border-top: 1px solid #777; }
  .sample { flex: none; height: 86px; margin: 0 11px 0 14px; background: #fff; border: 1.500px solid #b8b8b8; display: flex; justify-content: space-between; }
  .sample > span { padding: 12px 0 0 6px; }
  .sb { width: 15px; display: flex; flex-direction: column; }
  .sb b { flex: none; height: 15px; display: flex; align-items: center; justify-content: center; border: 1px solid #8a8a8a; border-radius: 2px; background: linear-gradient(90deg, #fff, #ddd); }
  .sb em { flex: 1; background: #eaeaea; }
  .sb .thumb1 { height: 24px; }
  .sb .thumb2 { height: 102px; }
  .r4 { flex: none; height: 21px; display: flex; align-items: center; padding: 0 11px 0 14px; margin-top: .5px; }
  .field { width: 333px; height: 18px; background: #fff; border: 1.500px solid #b8b8b8; display: flex; align-items: center; padding-left: 2px; }
  .undo { width: 22px; height: 20px; }
  .slider { margin: 0 4px 0 5px; }
  .swatch { width: 81px; height: 20px; border: 1.500px solid #888; border-radius: 2px; padding: 2px 3px; background: #f4f4f4; }
  .swatch i { display: block; height: 100%; background: #fff; }
  .sw2 { flex: 1; height: 20px; border-color: #888; }
  .hdots { margin: .5px 0 1px 228px; }
  .r5 { flex: none; height: 280px; display: flex; gap: 5px; padding: 0 11px 0 16px; }
  .list { width: 104px; background: #fff; border: 2px solid #5a9ee6; border-radius: 2px; }
  .pitem { height: 18.500px; display: flex; align-items: center; gap: 4px; padding-left: 2.500px; }
  .psel { background: #3399ff; fill: #fff; }
  .group { flex: 1; border: 1.500px solid #bdbdbd; border-radius: 2px; display: flex; overflow: hidden; }
  .gform { width: 515px; flex: none; padding-left: 6.500px; height: 271px; overflow: hidden; }
  .gh { height: 37px; padding-top: 6px; display: flex; align-items: flex-start; }
  u { border-bottom: 1px solid #222; text-decoration: none; }
  .radios { position: relative; height: 36px; display: flex; align-items: center; padding-left: 1px; }
  s { width: 12px; height: 12px; border: 1px solid #bbb; border-radius: 6px; background: #fff; margin-right: 4px; }
  s.on { background: radial-gradient(#000 0 3.500px, #fff 4.500px); margin-right: 5px; }
  .p1 { margin-right: 10px; }
  .p2 { margin-right: 11px; }
  .ring { position: absolute; left: 55px; top: -1px; }
  .pos { height: 24px; margin-top: 16px; display: flex; align-items: center; }
  .pl { margin-right: 6px; }
  .a1 { margin: 0 12px 0 4.500px; }
  .a2 { margin: 0 12px 0 4px; }
  .a3 { margin-left: 4px; }
  .ori { height: 20px; display: flex; align-items: center; padding-left: 40px; }
  .frow { display: flex; align-items: center; height: 19px; }
  .frow .combo { flex: 1; height: 19px; }
  .ovr { margin: 0 9px 0 8.500px; }
  .fl { margin-right: 5.500px; }
  .f1 { margin-top: 6px; }
  .f2 { margin-top: 16px; padding-left: 43.500px; }
  .f3 { margin-top: 11px; }
  .f4 { margin-top: 16px; padding-left: 38.500px; }
  .cut { height: 5px; margin-top: 9px; overflow: hidden; }
  .cut .fit { overflow: hidden; }
  .gsb { margin: 22px 0 7px -1px; }
  .r6 { flex: none; display: flex; gap: 9.500px; margin-top: 8px; padding: 0 2px 0 5px; height: 21px; }
  .r6 .btn { flex: 1 1 0; }
  .r6 .menu { padding-right: 12px; padding-left: 0; min-width: 0; }
  .dd { position: absolute; right: 4px; top: 7px; }
  .r7 { flex: none; display: flex; justify-content: flex-end; gap: 9px; margin-top: 8.500px; padding-right: 2px; height: 22px; }
  .r7 .btn { width: 69.500px; }
  .r7 .ok { border: 2px solid #5b86b5; background: linear-gradient(#cfe3f8, #dfe6ee); }
  .cur2 { position: absolute; left: 59px; top: 12px; }

  .result { width: 439px; height: 341px; margin: 0 0 0 355px; }
  .edge { width: 5px; border-left: 1.500px solid #3c6074; background: #bcd9f2; }
  .mini { position: relative; zoom: .735; display: flex; height: 464px; border-top: 2px solid #c4c4c4; }
  .mini .vicons { margin-top: -2px; }
  .mini .panelhead { margin-top: 1px; }
  .mini .ptools { margin-bottom: 3.500px; }
  .mini .tree { flex: none; height: 416px; }
  .mini .ptabs { display: flex; height: 12px; overflow: hidden; }
  .ptabs span { padding: 3px 8px 0; border: 1px solid #bbb; overflow: hidden; }
  .cur3 { position: absolute; left: 75px; top: 335px; }

  footer { flex: none; display: flex; margin: 15px 0 0 29px; }
  .fleft { width: 956px; }
  .purple { width: 950px; height: 10.500px; margin-top: 9px; background: #7030a0; }
  .ftext { display: flex; gap: 77px; padding: 20.500px 0 0 5px; font-family: "Liberation Serif", serif; }
  .pageno { width: 57px; display: flex; flex-direction: column; align-items: center; font-family: Lato, sans-serif; }
  .pageno span { padding: 9px 0 10px; }
  .pageno i { width: 57px; background: #9bbb59; }
  .g1 { height: 3px; }
  .g2 { height: 11px; }
</style>
